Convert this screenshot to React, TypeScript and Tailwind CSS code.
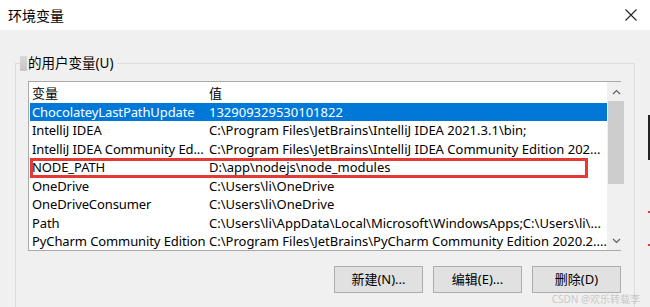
import React from "react";

interface EnvVar {
  name: string;
  value: string;
}

const vars: EnvVar[] = [
  { name: "ChocolateyLastPathUpdate", value: "132909329530101822" },
  { name: "IntelliJ IDEA", value: "C:\\Program Files\\JetBrains\\IntelliJ IDEA 2021.3.1\\bin;" },
  { name: "IntelliJ IDEA Community Ed...", value: "C:\\Program Files\\JetBrains\\IntelliJ IDEA Community Edition 202..." },
  { name: "NODE_PATH", value: "D:\\app\\nodejs\\node_modules" },
  { name: "OneDrive", value: "C:\\Users\\li\\OneDrive" },
  { name: "OneDriveConsumer", value: "C:\\Users\\li\\OneDrive" },
  { name: "Path", value: "C:\\Users\\li\\AppData\\Local\\Microsoft\\WindowsApps;C:\\Users\\li\\..." },
  { name: "PyCharm Community Edition", value: "C:\\Program Files\\JetBrains\\PyCharm Community Edition 2020.2...." },
];

const WinButton = ({ label }: { label: string }) => (
  <button className="w-[89px] h-[27px] bg-[#e1e1e1] border border-[#adadad] text-[13px] text-black flex items-center justify-center">
    {label}
  </button>
);

const App = (): JSX.Element => {
  return (
    <div
      className="w-[650px] h-[307px] bg-[#f0f0f0] overflow-hidden relative flex flex-col"
      style={{ fontFamily: '"Noto Sans", "Noto Sans CJK SC", sans-serif' }}
    >
      {/* title bar */}
      <div className="h-[30px] bg-white flex items-center justify-between pl-[8px] pr-[13px] shrink-0">
        <span className="text-[14px] text-black">环境变量</span>
        <svg width="12" height="12" viewBox="0 0 12 12">
          <path d="M0.5 0.5 L11.5 11.5 M11.5 0.5 L0.5 11.5" stroke="#222" strokeWidth="1.1" />
        </svg>
      </div>

      <div className="pt-[33px] pl-[15px] pr-[15px]">
        <div className="relative border-t border-l border-r border-[#dcdcdc] h-[250px] pl-[12px] pr-[13px]">
          <div className="absolute -top-[9px] left-[4px] flex items-center bg-[#f0f0f0] pr-1">
            <div className="w-[7px] h-[15px] bg-gradient-to-b from-[#d8d8d8] to-[#c4c4c4] mr-[1px]" />
            <span className="text-[13.5px] text-black leading-[17px]">的用户变量(U)</span>
          </div>

          {/* list view */}
          <div className="mt-[17px] h-[170px] bg-white border border-[#a9a9a9] flex">
            <div className="flex-1 flex flex-col text-[13px] text-black">
              <div className="h-[20.5px] flex items-center shrink-0 pt-[2px] leading-[18px]">
                <span className="w-[180px] pl-[3px]">变量</span>
                <span>值</span>
              </div>
              {vars.map((v, i) => (
                <div
                  key={v.name}
                  className={
                    i === 0
                      ? "h-[18.5px] flex items-center shrink-0 bg-[#0078d7] text-white ml-[1px] pt-[1px] leading-[17px]"
                      : "h-[18.5px] flex items-center shrink-0 ml-[1px] pt-[1px] leading-[17px]"
                  }
                >
                  <span className="w-[179px] pl-[2px] whitespace-nowrap tracking-[-0.1px]">{v.name}</span>
                  <span className="whitespace-nowrap">{v.value}</span>
                </div>
              ))}
            </div>
            {/* scrollbar */}
            <div className="w-[18px] bg-[#f0f0f0] flex flex-col shrink-0 relative z-10">
              <div className="h-[19px] flex items-center justify-center">
                <svg width="9" height="6" viewBox="0 0 9 6">
                  <path d="M1 5 L4.5 1.5 L8 5" fill="none" stroke="#606060" strokeWidth="1.2" />
                </svg>
              </div>
              <div className="h-[83px] bg-[#cdcdcd] mx-[1px]" />
              <div className="flex-1" />
              <div className="h-[19px] flex items-center justify-center">
                <svg width="9" height="6" viewBox="0 0 9 6">
                  <path d="M1 1 L4.5 4.5 L8 1" fill="none" stroke="#606060" strokeWidth="1.2" />
                </svg>
              </div>
            </div>
          </div>

          {/* highlight box */}
          <div className="absolute left-[14px] top-[94px] w-[558px] h-[20px] border-[3px] border-[#e53935]" />

          <div className="mt-[15px] flex justify-end gap-[10px]">
            <WinButton label="新建(N)..." />
            <WinButton label="编辑(E)..." />
            <WinButton label="删除(D)" />
          </div>
        </div>
      </div>

      {/* edge of a window behind */}
      <div className="absolute right-0 top-[115px] w-[2px] h-[45px] bg-[#222]" />
      <div className="absolute right-0 top-[211px] w-[2px] h-[2px] bg-[#e53935]" />
      <div className="absolute right-0 top-[244px] w-[2px] h-[2px] bg-[#e53935]" />

      <span className="absolute right-[10px] bottom-[3px] text-[10px] text-[#c8c8c8] leading-none">
        CSDN @欢乐转载李
      </span>
    </div>
  );
};

export default App;
